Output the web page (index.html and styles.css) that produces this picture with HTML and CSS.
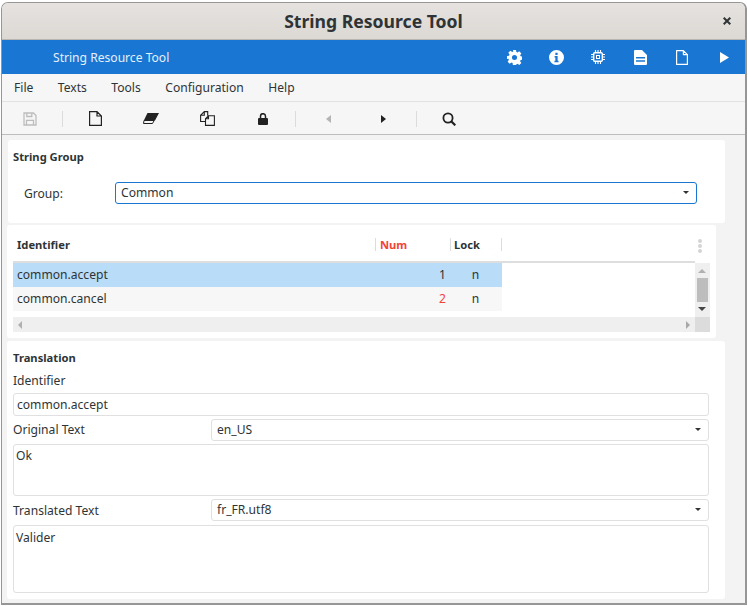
FILE: index.html
```html
<!DOCTYPE html>
<html lang="en">
<head>
  <meta name="viewport" content="width=device-width, initial-scale=1.0">
  <meta charset="UTF-8">
  <title>String Resource Tool</title>
  <link rel="stylesheet" href="styles.css">
</head>
<body>

<div class="window">

  <div class="titlebar">
    <span class="title">String Resource Tool</span>
    <svg class="close" width="8" height="8" viewBox="0 0 8 8"><path d="M.7 .7l6.600 6.600M7.300 .7L.7 7.300" stroke="#2e3436" stroke-width="2" fill="none"/></svg>
  </div>

  <div class="appbar">
    <span class="appname">String Resource Tool</span>
    <div class="appicons">
      <span class="appicon"><svg width="15" height="15" viewBox="0 0 16 16"><path fill="#fff" fill-rule="evenodd" d="M6.400 0h3.200l.4 2.200 1.200.5 1.900-1.300 2.200 2.200-1.300 1.900.5 1.200 2.200.4v3.200l-2.200.4-.5 1.200 1.300 1.900-2.200 2.200-1.900-1.300-1.200.5-.4 2.200H6.400L6 13.800l-1.200-.5-1.900 1.300-2.200-2.200 1.300-1.900-.5-1.200L0 9.600V6.400l2.200-.4.5-1.200-1.300-1.900 2.200-2.200 1.900 1.300 1.200-.5zM8 5.300a2.700 2.700 0 1 0 0 5.400 2.700 2.700 0 0 0 0-5.400z"/></svg></span>
      <span class="appicon"><svg width="15" height="15" viewBox="0 0 16 16"><path fill="#fff" fill-rule="evenodd" d="M8 0a8 8 0 1 0 0 16A8 8 0 0 0 8 0zM6.800 3h2.400v2.200H6.800zM6 6.500h3.200v5h1V13H5.800v-1.500h1V8H6z"/></svg></span>
      <span class="appicon"><svg width="14" height="14" viewBox="0 0 14 14"><rect x="2.700" y="2.700" width="8.600" height="8.600" rx="1" fill="none" stroke="#fff" stroke-width="1.400"/><path fill="#fff" d="M5 5h4v4H5z"/><path fill="#1976d2" d="M6 6h2v2H6z"/><path stroke="#fff" stroke-width="1.100" d="M4.500 0v2M7 0v2M9.500 0v2M4.500 12v2M7 12v2M9.500 12v2M0 4.500h2M0 7h2M0 9.500h2M12 4.500h2M12 7h2M12 9.500h2"/></svg></span>
      <span class="appicon"><svg width="13" height="15" viewBox="0 0 13 15"><path fill="#fff" fill-rule="evenodd" d="M1 0h7l5 5v9a1 1 0 0 1-1 1H1a1 1 0 0 1-1-1V1a1 1 0 0 1 1-1zM2 7v1.500h9V7zM2 10.300v1.500h9v-1.500z"/></svg></span>
      <span class="appicon"><svg width="12" height="15" viewBox="0 0 12 15"><path fill="none" stroke="#fff" stroke-width="1.200" stroke-linejoin="round" d="M.6 .6h6.800l4 4v9.800H.6zM7.400 .6v4h4"/></svg></span>
      <span class="appicon"><svg width="9" height="11" viewBox="0 0 9 11"><path fill="#fff" d="M0 0l9 5.500L0 11z"/></svg></span>
    </div>
  </div>

  <div class="menubar">
    <span>File</span>
    <span>Texts</span>
    <span>Tools</span>
    <span>Configuration</span>
    <span>Help</span>
  </div>

  <div class="toolbar">
    <svg class="tool-save" width="14" height="14" viewBox="0 0 14 14"><path fill="none" stroke="#bdbdbd" stroke-width="1.300" d="M1 1h9.500L13 3.500V13H1zM3.800 1v3.500h5V1M3.500 13V8.300h7V13"/></svg>
    <i class="sep sep-a"></i>
    <svg class="tool-new" width="13" height="15" viewBox="0 0 13 15"><path fill="none" stroke="#222" stroke-width="1.200" d="M.6 .6h7.400l4.400 4.400v9.400H.6zM8 .6V5h4.400"/></svg>
    <svg class="tool-erase" width="16" height="11" viewBox="0 0 16 11"><path fill="#222" d="M4.500 0H16l-4 7.500H.8z"/><path fill="#f5f5f5" stroke="#222" d="M1 7.500h10.200L9.500 10.500H.5z"/></svg>
    <svg class="tool-copy" width="15" height="15" viewBox="0 0 15 15"><path fill="none" stroke="#222" stroke-width="1.100" d="M5.500 10.500H.6V4.300L4.300 .6h3.400v4.200M4.300 .6v3.700H.6M5.500 14.400V7.700l3-2.900h5.900v9.600zM8.500 4.800v2.900h-3"/></svg>
    <svg class="tool-lock" width="10" height="12" viewBox="0 0 10 12"><rect y="5" width="10" height="7" rx="1" fill="#222"/><path fill="none" stroke="#222" stroke-width="1.500" d="M2.500 5.500V3.200a2.500 2.500 0 0 1 5 0v2.300"/></svg>
    <i class="sep sep-b"></i>
    <svg class="tool-prev" width="5" height="8" viewBox="0 0 5 8"><path fill="#b5b5b5" d="M5 0v8L0 4z"/></svg>
    <svg class="tool-next" width="5" height="8" viewBox="0 0 5 8"><path fill="#222" d="M0 0v8l5-4z"/></svg>
    <i class="sep sep-c"></i>
    <svg class="tool-find" width="14" height="14" viewBox="0 0 14 14"><circle cx="6" cy="6" r="4.600" fill="none" stroke="#222" stroke-width="1.800"/><path stroke="#222" stroke-width="2.200" d="M9 9l4.300 4.300"/></svg>
  </div>

  <div class="content">

    <section class="panel group-panel">
      <h3>String Group</h3>
      <div class="group-row">
        <label>Group:</label>
        <div class="combo combo-focus">Common<b class="arrow"></b></div>
      </div>
    </section>

    <section class="panel table-panel">
      <div class="table-head">
        <div class="th th-id">Identifier</div>
        <div class="th th-num">Num</div>
        <div class="th th-lock">Lock</div>
        <div class="th-fill"><span class="dots"><i></i><i></i><i></i></span></div>
      </div>
      <div class="table-body">
        <div class="rows">
          <div class="row row-sel">
            <div class="td-id">common.accept</div>
            <div class="td-num">1</div>
            <div class="td-lock">n</div>
          </div>
          <div class="row row-alt">
            <div class="td-id">common.cancel</div>
            <div class="td-num red">2</div>
            <div class="td-lock">n</div>
          </div>
        </div>
        <div class="vscroll">
          <b class="up"></b>
          <span class="thumb"></span>
          <b class="down"></b>
        </div>
      </div>
      <div class="hscroll">
        <div class="htrack"><b class="left"></b><b class="right"></b></div>
        <div class="corner"></div>
      </div>
    </section>

    <section class="panel trans-panel">
      <h3>Translation</h3>
      <div class="lbl lbl-id">Identifier</div>
      <div class="field field-id">common.accept</div>
      <div class="form-row">
        <div class="lbl">Original Text</div>
        <div class="combo">en_US<b class="arrow"></b></div>
      </div>
      <div class="area area-orig">Ok</div>
      <div class="form-row">
        <div class="lbl lbl-trans">Translated Text</div>
        <div class="combo">fr_FR.utf8<b class="arrow"></b></div>
      </div>
      <div class="area area-trans">Valider</div>
    </section>

  </div>
</div>

</body>
</html>
```

FILE: styles.css
```css
* {
  box-sizing: border-box;
}
html, body {
  margin: 0;
  height: 100%;
  background-color: #fff;
}
body {
  padding: 2px 1px 1px 1px;
  font-family: "Noto Sans", sans-serif;
  font-size: 12.1px;
  color: #2e3436;
  overflow: hidden;
}

.window {
  width: 746px;
  height: 603px;
  border: 1px solid #969696;
  border-bottom-width: 2px;
  border-right-width: 2px;
  border-radius: 7px 7px 0 0;
  background-color: #f3f3f3;
  overflow: hidden;
  display: flex;
  flex-direction: column;
}

.titlebar {
  height: 37px;
  flex: none;
  display: flex;
  align-items: center;
  justify-content: center;
  background: linear-gradient(#e6e2df, #dcd8d4);
  border-bottom: 1px solid #b8b4af;
  position: relative;
}
.title {
  font-size: 17.6px;
  font-weight: 700;
  color: #2e3436;
}
.close {
  position: absolute;
  right: 14px;
  top: 14px;
}

.appbar {
  height: 34px;
  flex: none;
  background-color: #1976d2;
  color: #e6f0fa;
  display: flex;
  align-items: center;
  justify-content: space-between;
  padding-left: 51px;
}
.appicons {
  display: flex;
  align-items: center;
}
.appicon {
  width: 42px;
  display: flex;
  align-items: center;
  justify-content: center;
}

.menubar {
  height: 28px;
  flex: none;
  display: flex;
  align-items: center;
  gap: 24.5px;
  padding-left: 12px;
  background-color: #f6f6f6;
  border-bottom: 1px solid #e2e2e2;
}

.toolbar {
  height: 33px;
  flex: none;
  display: flex;
  align-items: center;
  padding-left: 21px;
  padding-top: 1px;
  background-color: #f6f6f6;
  border-bottom: 1px solid #bdbdbd;
}
.sep {
  width: 1px;
  height: 16px;
  background-color: #dcdcdc;
}
.sep-a { margin-left: 25px; }
.tool-new { margin-left: 26px; }
.tool-erase { margin-left: 41px; }
.tool-copy { margin-left: 41px; }
.tool-lock { margin-left: 43px; }
.sep-b { margin-left: 27px; }
.tool-prev { margin-left: 30px; }
.tool-next { margin-left: 50px; }
.sep-c { margin-left: 30px; }
.tool-find { margin-left: 25px; }

.content {
  flex: 1;
  padding: 5px 0 0 5px;
}

.panel {
  background-color: #fff;
  border-radius: 3px;
}
.panel h3 {
  margin: 0;
  font-size: 11.2px;
  line-height: 16px;
  font-weight: 700;
  color: #2e3436;
}

.group-panel {
  width: 717px;
  height: 83px;
  margin-left: 1px;
  padding: 9px 28px 0 5px;
}
.group-row {
  display: flex;
  align-items: center;
  margin-top: 17px;
  padding-left: 11px;
}
.group-row label {
  width: 91px;
}
.group-row .combo {
  flex: 1;
}

.combo {
  position: relative;
  height: 22px;
  line-height: 19px;
  padding-left: 5px;
  border: 1px solid #e0e0e0;
  border-radius: 3px;
  background-color: #fff;
}
.combo-focus {
  border-color: #1976d2;
}
.arrow {
  position: absolute;
  right: 7px;
  top: 8px;
  border-left: 3px solid transparent;
  border-right: 3px solid transparent;
  border-top: 3px solid #2e3436;
}

.table-panel {
  width: 709px;
  height: 113px;
  margin-top: 2px;
  padding: 0 6px;
}
.table-head {
  display: flex;
  height: 38px;
  border-bottom: 2px solid #dedede;
  width: 682px;
  padding-top: 9px;
  font-size: 11.2px;
  font-weight: 700;
}
.th {
  height: 13px;
  line-height: 13px;
  margin-top: 4px;
  border-right: 1px solid #dcdcdc;
}
.th-id {
  width: 363px;
  padding-left: 4px;
  color: #2e3436;
}
.th-num {
  width: 75px;
  padding-left: 4px;
  color: #f44336;
}
.th-lock {
  width: 51px;
  padding-left: 3px;
}
.th-fill {
  flex: 1;
  position: relative;
}
.dots {
  position: absolute;
  right: -7px;
  top: 5px;
  display: flex;
  flex-direction: column;
  gap: 1px;
}
.dots i {
  width: 4px;
  height: 4px;
  border-radius: 50%;
  background-color: #d4d4d4;
}

.table-body {
  display: flex;
  height: 54px;
}
.rows {
  width: 682px;
}
.row {
  display: flex;
  width: 489px;
  height: 24px;
  line-height: 24px;
}
.row-sel {
  background-color: #b9dcf8;
}
.row-alt {
  background-color: #f7f7f7;
}
.td-id {
  width: 380px;
  padding-left: 4px;
}
.td-num {
  width: 53px;
  text-align: right;
}
.td-lock {
  flex: 1;
  text-align: center;
  padding-left: 3px;
}
.red {
  color: #f44336;
}

.vscroll {
  width: 15px;
  background-color: #efefef;
  position: relative;
}
.thumb {
  position: absolute;
  left: 2px;
  top: 15px;
  width: 11px;
  height: 24px;
  background-color: #bdbdbd;
}
.up, .down, .left, .right {
  position: absolute;
  width: 0;
  height: 0;
}
.up {
  left: 3px;
  top: 6px;
  border-left: 4px solid transparent;
  border-right: 4px solid transparent;
  border-bottom: 4px solid #b0b0b0;
}
.down {
  left: 3px;
  top: 44px;
  border-left: 4px solid transparent;
  border-right: 4px solid transparent;
  border-top: 4px solid #444;
}

.hscroll {
  display: flex;
  height: 15px;
}
.htrack {
  width: 682px;
  background-color: #efefef;
  position: relative;
}
.left {
  left: 5px;
  top: 4px;
  border-top: 4px solid transparent;
  border-bottom: 4px solid transparent;
  border-right: 4px solid #b0b0b0;
}
.right {
  right: 5px;
  top: 4px;
  border-top: 4px solid transparent;
  border-bottom: 4px solid transparent;
  border-left: 4px solid #a8a8a8;
}
.corner {
  width: 15px;
  background-color: #dcdcdc;
}

.trans-panel {
  width: 718px;
  height: 258px;
  margin-top: 3px;
  padding: 9px 16px 0 6px;
}
.lbl {
  line-height: 16px;
}
.lbl-id {
  margin-top: 7px;
}
.lbl-trans {
  padding-top: 2px;
}
.field, .area {
  border: 1px solid #e0e0e0;
  border-radius: 3px;
  background-color: #fff;
}
.field-id {
  height: 23px;
  line-height: 21px;
  margin-top: 4px;
  padding-left: 3px;
}
.form-row {
  display: flex;
  align-items: center;
  margin-top: 3px;
}
.form-row .lbl {
  width: 198px;
  flex: none;
}
.form-row .combo {
  flex: 1;
}
.area {
  margin-top: 3px;
  padding: 2px;
}
.area-orig { height: 52px; }
.area-trans {
  height: 68px;
  margin-top: 4px;
  padding-top: 3px;
}
```
